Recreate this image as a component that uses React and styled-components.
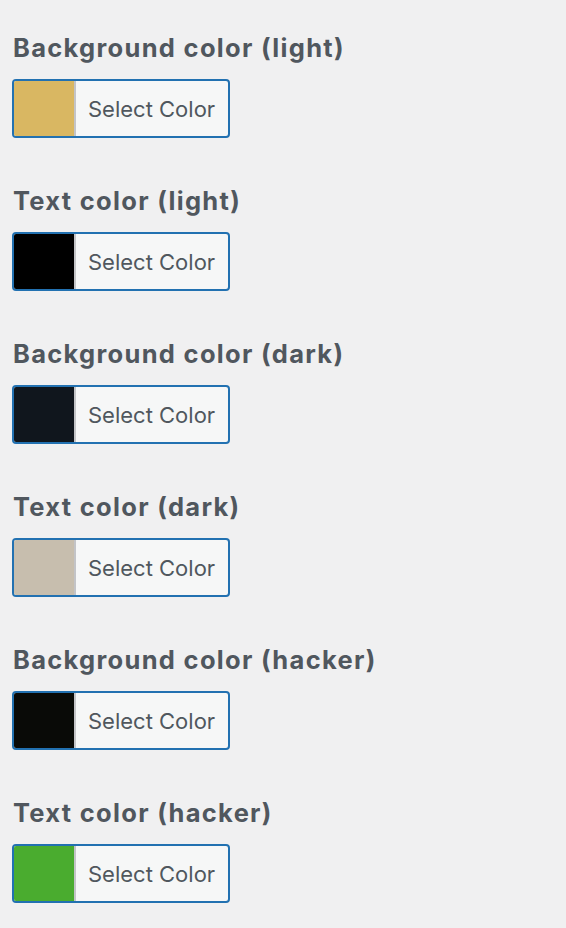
import styled, { createGlobalStyle } from "styled-components"

const colors = [
    { label: "Background color (light)", value: "#d9b762" },
    { label: "Text color (light)", value: "#000000" },
    { label: "Background color (dark)", value: "#10161d" },
    { label: "Text color (dark)", value: "#c7beae" },
    { label: "Background color (hacker)", value: "#090a07" },
    { label: "Text color (hacker)", value: "#4aac2f" },
]

const Global = createGlobalStyle`
    body{
        margin: 0;
        background: #f0f0f1;
        font-family: Inter, "Liberation Sans", Arial, sans-serif;
    }
`

export default function App(){
    return(
        <Container>
            <Global />
            {colors.map((c) => (
                <Field key={c.label}>
                    <h2>{c.label}</h2>
                    <PickerButton type="button">
                        <Swatch color={c.value} />
                        <span>Select Color</span>
                    </PickerButton>
                </Field>
            ))}
        </Container>
    )
}

const Container = styled.div`
    display: flex;
    flex-direction: column;
    padding: 32px 0 0 12px;
    gap: 47px;
`

const Field = styled.div`
    display: flex;
    flex-direction: column;
    align-items: flex-start;
    gap: 15px;

    >h2{
        margin: 0 0 0 1px;
        font-size: 25.5px;
        line-height: 32px;
        letter-spacing: 1.3px;
        font-weight: 700;
        color: #50575e;
    }
`

const PickerButton = styled.button`
    display: flex;
    align-items: stretch;
    width: 218px;
    height: 59px;
    padding: 0;
    border: 2px solid #2271b1;
    border-radius: 4px;
    background: #f6f7f7;
    overflow: hidden;
    cursor: pointer;

    >span{
        display: flex;
        align-items: center;
        padding-left: 12px;
        font-family: Inter, "Liberation Sans", Arial, sans-serif;
        font-size: 22px;
        color: #50575e;
    }
`

const Swatch = styled.div`
    width: 60px;
    background: ${(p) => p.color};
    border-right: 2px solid #c3c4c7;
`
